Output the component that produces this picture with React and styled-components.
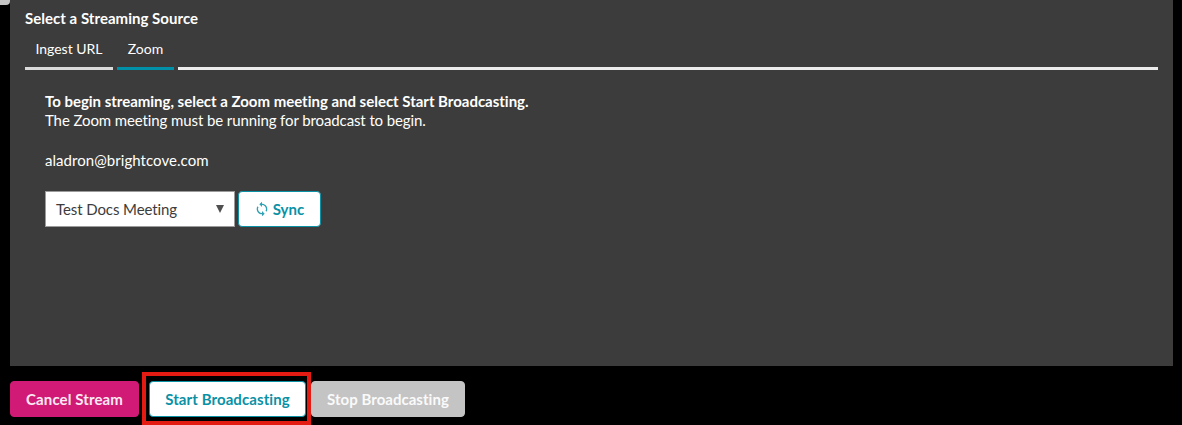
import React from "react";
import styled, { createGlobalStyle } from "styled-components";
import { MdSync } from "react-icons/md";

const GlobalStyle = createGlobalStyle`
  * { box-sizing: border-box; }
  body {
    margin: 0;
    background: #000;
    color: #fff;
    font-family: Lato, "Liberation Sans", sans-serif;
    font-size: 15px;
    font-variant-ligatures: none;
    overflow: hidden;
  }
`;

const Page = styled.div`
  height: 425px;
  overflow: hidden;
  background: #000;
`;

const Main = styled.div`
  display: flex;
  height: 366px;
`;

const SideStub = styled.div`
  flex: none;
  width: 10px;
  height: 5px;
  border-radius: 0 0 4px 0;
  background: #c6c6c6;
`;

const Panel = styled.section`
  flex: none;
  width: 1163px;
  padding: 9px 15px 0;
  background: #3c3c3c;
`;

const Title = styled.h2`
  margin: 0;
  font-size: 15px;
  line-height: 19px;
  font-weight: 700;
  letter-spacing: 0.03px;
`;

const Tabs = styled.nav`
  display: flex;
  gap: 4px;
  height: 42px;
`;

const Tab = styled.div`
  flex: none;
  width: ${(p) => p.$width}px;
  padding-top: 12px;
  border-bottom: 3px solid ${(p) => (p.$active ? "#0091a8" : "#dadada")};
  font-size: 14px;
  line-height: 18px;
  text-align: center;
  white-space: nowrap;
`;

const TabFill = styled.div`
  flex: 1;
  border-bottom: 3px solid #ececec;
`;

const Content = styled.div`
  padding: 22px 20px 0;
`;

const Line = styled.p`
  margin: 0 0 ${(p) => p.$gap || 0}px;
  font-weight: ${(p) => (p.$bold ? 700 : 400)};
  line-height: 19px;
  letter-spacing: ${(p) => p.$tracking || 0}px;
`;

const Controls = styled.div`
  display: flex;
  gap: 3px;
`;

const Select = styled.div`
  display: flex;
  align-items: center;
  justify-content: space-between;
  width: 190px;
  height: 36px;
  padding: 0 10px;
  border: 1px solid #9b9b9b;
  background: #fff;
  color: #3c3c3c;
  letter-spacing: -0.09px;
`;

const Caret = styled.span`
  width: 0;
  height: 0;
  border: 4px solid transparent;
  border-top: 8px solid #505050;
  border-bottom: 0;
`;

const SyncIcon = styled(MdSync)`
  flex: none;
  width: 16px;
  height: 16px;
  opacity: 0.85;
`;

const tones = {
  outline: { bg: "#fff", fg: "#0a91a6", line: "#0a91a6" },
  danger: { bg: "#d01a75", fg: "#fbeaf3", line: "#d01a75" },
  disabled: { bg: "#c4c4c4", fg: "#fafafa", line: "#c4c4c4" },
};

const Button = styled.button`
  display: flex;
  align-items: center;
  justify-content: center;
  gap: 3px;
  width: ${(p) => p.$width}px;
  height: 36px;
  padding: 0 ${(p) => p.$nudge || 0}px 0 0;
  border: 1px solid ${(p) => tones[p.$tone].line};
  border-radius: 4px;
  background: ${(p) => tones[p.$tone].bg};
  color: ${(p) => tones[p.$tone].fg};
  font: 700 15px Lato, "Liberation Sans", sans-serif;
  font-variant-ligatures: none;
  letter-spacing: ${(p) => p.$tracking || 0}px;
  white-space: nowrap;
`;

const Actions = styled.footer`
  display: flex;
  align-items: flex-start;
  padding: 6px 0 0 10px;
`;

const ActionSlot = styled.div`
  padding-top: 9px;
`;

const Highlight = styled.div`
  width: 169px;
  height: 53px;
  margin-left: 3px;
  padding: 5px 0 0 3px;
  border: 4px solid #e31b13;
`;

export default function App() {
  return (
    <Page>
      <GlobalStyle />
      <Main>
        <SideStub />
        <Panel>
          <Title>Select a Streaming Source</Title>
          <Tabs>
            <Tab $width={88}>Ingest URL</Tab>
            <Tab $width={57} $active>Zoom</Tab>
            <TabFill />
          </Tabs>
          <Content>
            <Line $bold $tracking={-0.015}>To begin streaming, select a Zoom meeting and select Start Broadcasting.</Line>
            <Line $gap={21} $tracking={-0.105}>The Zoom meeting must be running for broadcast to begin.</Line>
            <Line $gap={21} $tracking={0.05}>aladron@brightcove.com</Line>
            <Controls>
              <Select>
                Test Docs Meeting
                <Caret />
              </Select>
              <Button $tone="outline" $width={83} $nudge={1}>
                <SyncIcon />
                Sync
              </Button>
            </Controls>
          </Content>
        </Panel>
      </Main>
      <Actions>
        <ActionSlot>
          <Button $tone="danger" $width={129} $tracking={0.1}>Cancel Stream</Button>
        </ActionSlot>
        <Highlight>
          <Button $tone="outline" $width={157} $tracking={0.09}>Start Broadcasting</Button>
        </Highlight>
        <ActionSlot>
          <Button $tone="disabled" $width={154} $tracking={0.03}>Stop Broadcasting</Button>
        </ActionSlot>
      </Actions>
    </Page>
  );
}
